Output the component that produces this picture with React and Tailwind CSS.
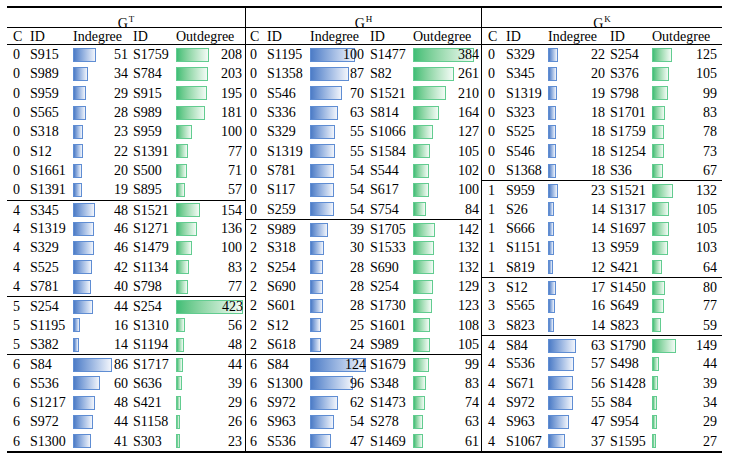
import React from "react";

const GT = [
  [0, "S915", 51, "S1759", 208],
  [0, "S989", 34, "S784", 203],
  [0, "S959", 29, "S915", 195],
  [0, "S565", 28, "S989", 181],
  [0, "S318", 23, "S959", 100],
  [0, "S12", 22, "S1391", 77],
  [0, "S1661", 20, "S500", 71],
  [0, "S1391", 19, "S895", 57],
  [4, "S345", 48, "S1521", 154],
  [4, "S1319", 46, "S1271", 136],
  [4, "S329", 46, "S1479", 100],
  [4, "S525", 42, "S1134", 83],
  [4, "S781", 40, "S798", 77],
  [5, "S254", 44, "S254", 423],
  [5, "S1195", 16, "S1310", 56],
  [5, "S382", 14, "S1194", 48],
  [6, "S84", 86, "S1717", 44],
  [6, "S536", 60, "S636", 39],
  [6, "S1217", 48, "S421", 29],
  [6, "S972", 44, "S1158", 26],
  [6, "S1300", 41, "S303", 23],
];

const GH = [
  [0, "S1195", 100, "S1477", 384],
  [0, "S1358", 87, "S82", 261],
  [0, "S546", 70, "S1521", 210],
  [0, "S336", 63, "S814", 164],
  [0, "S329", 55, "S1066", 127],
  [0, "S1319", 55, "S1584", 105],
  [0, "S781", 54, "S544", 102],
  [0, "S117", 54, "S617", 100],
  [0, "S259", 54, "S754", 84],
  [2, "S989", 39, "S1705", 142],
  [2, "S318", 30, "S1533", 132],
  [2, "S254", 28, "S690", 132],
  [2, "S690", 28, "S254", 129],
  [2, "S601", 28, "S1730", 123],
  [2, "S12", 25, "S1601", 108],
  [2, "S618", 24, "S989", 105],
  [6, "S84", 124, "S1679", 99],
  [6, "S1300", 96, "S348", 83],
  [6, "S972", 62, "S1473", 74],
  [6, "S963", 54, "S278", 63],
  [6, "S536", 47, "S1469", 61],
];

const GK = [
  [0, "S329", 22, "S254", 125],
  [0, "S345", 20, "S376", 105],
  [0, "S1319", 19, "S798", 99],
  [0, "S323", 18, "S1701", 83],
  [0, "S525", 18, "S1759", 78],
  [0, "S546", 18, "S1254", 73],
  [0, "S1368", 18, "S36", 67],
  [1, "S959", 23, "S1521", 132],
  [1, "S26", 14, "S1317", 105],
  [1, "S666", 14, "S1697", 105],
  [1, "S1151", 13, "S959", 103],
  [1, "S819", 12, "S421", 64],
  [3, "S12", 17, "S1450", 80],
  [3, "S565", 16, "S649", 77],
  [3, "S823", 14, "S823", 59],
  [4, "S84", 63, "S1790", 149],
  [4, "S536", 57, "S498", 44],
  [4, "S671", 56, "S1428", 39],
  [4, "S972", 55, "S84", 34],
  [4, "S963", 47, "S954", 29],
  [4, "S1067", 37, "S1595", 27],
];

const LAYOUTS = {
  T: {
    width: "w-[239px] border-r border-black",
    grid: "grid-cols-[20px_43px_60px_43px_72px]",
    cPad: "pl-[6px]",
    inPr: "pr-[2px]",
    outPr: "pr-[3px]",
  },
  H: {
    width: "w-[236px] border-r border-black",
    grid: "grid-cols-[18px_43px_60px_43px_71px]",
    cPad: "pl-[4px]",
    inPr: "pr-[3px]",
    outPr: "pr-[2px]",
  },
  K: {
    width: "w-[240px]",
    grid: "grid-cols-[21px_42px_62px_42px_73px]",
    cPad: "pl-[6px]",
    inPr: "pr-[2px]",
    outPr: "pr-[5px]",
  },
};

function BarCell({ value, scale, kind, pr }) {
  const w = Math.max(2, Math.round(value * scale));
  const barCls =
    kind === "in"
      ? "bg-linear-to-r from-[#4d7cc6] to-[#f2f5fb] border border-[#5f8dd3]"
      : "bg-linear-to-r from-[#3fbe76] to-[#f3fbf6] border border-[#62cc90]";
  return (
    <div className={`grid items-center pl-[3px] ${pr}`}>
      <div
        className={`col-start-1 row-start-1 justify-self-start h-[14px] ${barCls}`}
        style={{ width: w }}
      />
      <div className="col-start-1 row-start-1 justify-self-end relative">{value}</div>
    </div>
  );
}

function SubTable({ label, rows, breaks, layout }) {
  const L = LAYOUTS[label];
  return (
    <div className={`flex flex-col ${L.width}`}>
      <div className="h-[20px] border-b border-black text-center leading-[17px] pt-[3px]">
        G<span className="text-[9px] align-[6px] ml-[1px]">{label}</span>
      </div>
      <div className={`grid ${L.grid} h-[17px] leading-[17px] border-b border-black`}>
        <div className={L.cPad}>C</div>
        <div className="pl-[3px]">ID</div>
        <div className="pl-[3px]">Indegree</div>
        <div className="pl-[3px]">ID</div>
        <div className="pl-[3px]">Outdegree</div>
      </div>
      {rows.map((r, i) => (
        <div
          key={i}
          className={`grid ${L.grid} h-[19.33px] leading-[19.33px] ${
            breaks.includes(i) ? "border-t border-black" : ""
          }`}
        >
          <div className={L.cPad}>{r[0]}</div>
          <div className="pl-[3px]">{r[1]}</div>
          <BarCell value={r[2]} scale={0.45} kind="in" pr={L.inPr} />
          <div className="pl-[3px]">{r[3]}</div>
          <BarCell value={r[4]} scale={0.158} kind="out" pr={L.outPr} />
        </div>
      ))}
    </div>
  );
}

export default function App() {
  return (
    <div className="w-[730px] h-[460px] bg-white pt-[6px] pl-[7px] text-black text-[14px] font-['Liberation_Serif',serif]">
      <div className="flex w-[715px] border-t-2 border-b-2 border-black">
        <SubTable label="T" rows={GT} breaks={[8, 13, 16]} />
        <SubTable label="H" rows={GH} breaks={[9, 16]} />
        <SubTable label="K" rows={GK} breaks={[7, 12, 15]} />
      </div>
    </div>
  );
}
